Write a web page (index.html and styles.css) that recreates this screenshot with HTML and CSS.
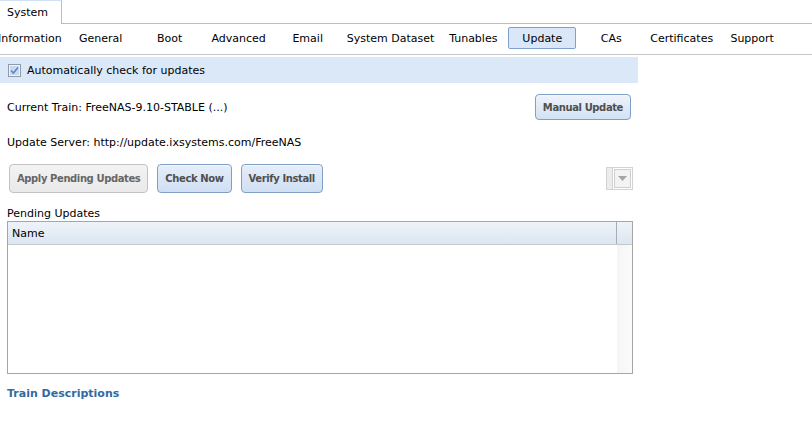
FILE: index.html
```html
<!DOCTYPE html>
<html>
<head>
<meta charset="utf-8">
<link rel="stylesheet" href="styles.css">
</head>
<body>
<div class="page">
  <div class="toptabs">
    <div class="toptab">System</div>
    <div class="toptab-rest"></div>
  </div>
  <div class="subtabs">
    <div class="subtabs-inner">
      <div class="tab first">Information</div>
      <div class="tab">General</div>
      <div class="tab">Boot</div>
      <div class="tab">Advanced</div>
      <div class="tab">Email</div>
      <div class="tab">System Dataset</div>
      <div class="tab">Tunables</div>
      <div class="tab active">Update</div>
      <div class="tab">CAs</div>
      <div class="tab">Certificates</div>
      <div class="tab">Support</div>
    </div>
  </div>
  <div class="content">
    <div class="autorow">
      <span class="checkbox">
        <svg width="13" height="13" viewBox="0 0 13 13">
          <rect x="0.5" y="0.5" width="12" height="12" fill="#eef3fa" stroke="#8f9bab"/>
          <rect x="2" y="2" width="9" height="9" fill="#c9daf0"/>
          <path d="M3 6.5 L5.4 9 L10 3.5" fill="none" stroke="#5a86c0" stroke-width="1.6"/>
        </svg>
      </span>
      <span>Automatically check for updates</span>
    </div>
    <div class="trainrow">
      <span>Current Train: FreeNAS-9.10-STABLE (...)</span>
      <button class="btn blue manual">Manual Update</button>
    </div>
    <div class="serverrow">Update Server: http://update.ixsystems.com/FreeNAS</div>
    <div class="btnrow">
      <div class="btns">
        <button class="btn gray">Apply Pending Updates</button>
        <button class="btn blue">Check Now</button>
        <button class="btn blue">Verify Install</button>
      </div>
      <div class="dropdown">
        <div class="dd-left"></div>
        <div class="dd-arrow">
          <svg width="9" height="5" viewBox="0 0 9 5"><path d="M0 0 H9 L4.5 5 Z" fill="#a5a5a5"/></svg>
        </div>
      </div>
    </div>
    <div class="pending-label">Pending Updates</div>
    <div class="grid">
      <div class="grid-head">
        <div class="col-name">Name</div>
        <div class="col-scroll"></div>
      </div>
      <div class="grid-body">
        <div class="body-main"></div>
        <div class="body-scroll"></div>
      </div>
    </div>
    <a class="trainlink" href="#">Train Descriptions</a>
  </div>
</div>
</body>
</html>
```
FILE: styles.css
```css
html, body {
  margin: 0;
  padding: 0;
  background: #ffffff;
}
body {
  font-family: "DejaVu Sans", Verdana, sans-serif;
  font-size: 11px;
  color: #000000;
  width: 812px;
  height: 439px;
  overflow: hidden;
}
.page {
  display: flex;
  flex-direction: column;
}
.toptabs {
  display: flex;
  height: 24px;
}
.toptab {
  width: 62px;
  box-sizing: border-box;
  height: 24px;
  padding: 5px 0 0 7px;
  border-top: 1px solid #cfe0f2;
  border-right: 1px solid #b8bec6;
  background: #ffffff;
}
.toptab-rest {
  flex: 1;
  border-bottom: 1px solid #b8bec6;
}
.subtabs {
  height: 30px;
  border-bottom: 1px solid #c3c6ca;
  overflow: hidden;
}
.subtabs-inner {
  display: flex;
  gap: 1px;
  margin-left: -6px;
  padding-top: 3px;
}
.tab {
  min-width: 68px;
  height: 22px;
  box-sizing: border-box;
  padding: 0 3px;
  display: flex;
  align-items: center;
  justify-content: center;
  border: 1px solid transparent;
  border-radius: 2px;
  white-space: nowrap;
}
.tab.active {
  background: #d9e7f8;
  border-color: #7fa1c7;
}
.content {
  display: flex;
  flex-direction: column;
  width: 638px;
  padding-top: 2px;
}
.autorow {
  display: flex;
  align-items: center;
  gap: 6px;
  height: 26px;
  background: #dbe8f8;
  padding-left: 8px;
}
.checkbox {
  display: flex;
  width: 13px;
  height: 13px;
}
.trainrow {
  display: flex;
  justify-content: space-between;
  align-items: center;
  height: 26px;
  margin-top: 11px;
  padding-left: 7px;
  padding-right: 7px;
}
.serverrow {
  padding-left: 7px;
  margin-top: 16px;
  height: 14px;
  line-height: 14px;
}
.btnrow {
  display: flex;
  justify-content: space-between;
  align-items: center;
  margin-top: 14px;
  padding-left: 9px;
  padding-right: 5px;
}
.btns {
  display: flex;
  gap: 9px;
}
.btn {
  font-family: "DejaVu Sans", Verdana, sans-serif;
  font-weight: bold;
  font-size: 10px;
  letter-spacing: -0.4px;
  color: #4f4f4f;
  height: 29px;
  padding: 0 7px;
  border-radius: 4px;
  border: 1px solid #7f9fc4;
  background: linear-gradient(#e6eef9, #cfdff3);
  box-shadow: inset 0 1px 0 #f4f8fd;
  cursor: pointer;
}
.btn.manual {
  height: 26px;
  background: linear-gradient(#eef3fb, #d3e2f5);
}
.btn.gray {
  color: #666666;
  border-color: #c2c2c2;
  background: linear-gradient(#f3f3f3, #e9e9e9);
  box-shadow: none;
}
.dropdown {
  display: flex;
  width: 27px;
  height: 23px;
  box-sizing: border-box;
  border: 1px solid #d2d2d2;
  background: #ffffff;
}
.dd-left {
  width: 5px;
  background: #ececec;
  border-right: 1px solid #d2d2d2;
}
.dd-arrow {
  flex: 1;
  display: flex;
  align-items: center;
  justify-content: center;
  margin: 1px;
  border: 1px solid #cfcfcf;
  background: #f3f3f3;
}
.pending-label {
  padding-left: 7px;
  margin-top: 14px;
  height: 14px;
  line-height: 14px;
}
.grid {
  margin-left: 7px;
  width: 626px;
  height: 153px;
  box-sizing: border-box;
  border: 1px solid #a6a6a6;
  display: flex;
  flex-direction: column;
}
.grid-head {
  display: flex;
  height: 22px;
  border-bottom: 1px solid #c5c8cc;
  background: linear-gradient(#eef3f9, #dce6f1);
}
.col-name {
  flex: 1;
  display: flex;
  align-items: center;
  padding-left: 4px;
  border-right: 1px solid #a9adb2;
}
.col-scroll {
  width: 15px;
}
.grid-body {
  flex: 1;
  display: flex;
}
.body-main {
  flex: 1;
}
.body-scroll {
  width: 15px;
  height: 100%;
  background: linear-gradient(90deg, #f5f5f5, #fbfbfb);
}
.trainlink {
  margin-top: 13px;
  margin-left: 7px;
  font-weight: bold;
  color: #336aa3;
  text-decoration: none;
  height: 14px;
  line-height: 14px;
}
```
